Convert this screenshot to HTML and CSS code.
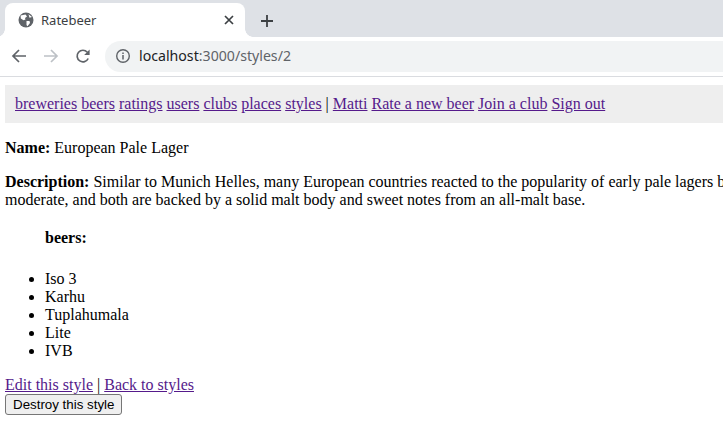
FILE: index.html
```html
<!DOCTYPE html>
<html lang="en">
<head>
<meta charset="utf-8">
<title>Ratebeer</title>
<link rel="stylesheet" href="styles.css">
</head>
<body>
<div class="tabstrip">
  <div class="tab">
    <svg class="favicon" width="16" height="16" viewBox="0 0 16 16"><circle cx="8" cy="8" r="7.5" fill="#5f6368"/><path d="M2.6 3.6 L7.5 2.6 L9 4.5 L7 6 L7.5 7.5 L5.5 8.2 L2.8 6.5 Z M8.5 9 L11.5 9 L12 11 L9.5 14.2 L8.5 13 Z M10.5 2.2 L14 5 L11.5 5.7 Z" fill="#fff"/></svg>
    <span class="tab-title">Ratebeer</span>
    <svg class="tab-close" width="10" height="10" viewBox="0 0 10 10"><path d="M1 1 L9 9 M9 1 L1 9" stroke="#3c4043" stroke-width="1.7" fill="none"/></svg>
  </div>
  <svg class="newtab" width="14" height="14" viewBox="0 0 14 14"><path d="M7 1 V13 M1 7 H13" stroke="#3c4043" stroke-width="1.8" fill="none"/></svg>
</div>
<div class="toolbar">
  <svg class="nav-icon" width="16" height="16" viewBox="0 0 16 16"><path d="M15 8 H2 M8 2 L2 8 L8 14" stroke="#5f6368" stroke-width="1.7" fill="none"/></svg>
  <svg class="nav-icon" width="16" height="16" viewBox="0 0 16 16"><path d="M1 8 H14 M8 2 L14 8 L8 14" stroke="#bdc1c6" stroke-width="1.7" fill="none"/></svg>
  <svg class="nav-icon" width="16" height="16" viewBox="0 0 16 16"><path d="M13.2 10.5 A5.8 5.8 0 1 1 12.3 4.2" stroke="#5f6368" stroke-width="1.7" fill="none"/><path d="M14.6 1.6 V7 H9.2 Z" fill="#5f6368"/></svg>
  <div class="omnibox">
    <svg class="info" width="16" height="16" viewBox="0 0 16 16"><circle cx="8" cy="8" r="6.3" stroke="#5f6368" stroke-width="1.4" fill="none"/><path d="M8 7 V11.5 M8 4.5 V6" stroke="#5f6368" stroke-width="1.5" fill="none"/></svg>
    <span class="url"><span class="host">localhost</span>:3000/styles/2</span>
  </div>
</div>
<div class="viewport">
  <div class="page">
    <div class="nav">
      <a href="#">breweries</a> <a href="#">beers</a> <a href="#">ratings</a> <a href="#">users</a> <a href="#">clubs</a> <a href="#">places</a> <a href="#">styles</a> | <a href="#">Matti</a> <a href="#">Rate a new beer</a> <a href="#">Join a club</a> <a href="#">Sign out</a>
    </div>
    <p><strong>Name:</strong> European Pale Lager</p>
    <p><strong>Description:</strong> Similar to Munich Helles, many European countries reacted to the popularity of early pale lagers by brewing their own. Hop flavor is<br>moderate, and both are backed by a solid malt body and sweet notes from an all-malt base.</p>
    <blockquote class="beers-title"><strong>beers:</strong></blockquote>
    <ul>
      <li>Iso 3</li>
      <li>Karhu</li>
      <li>Tuplahumala</li>
      <li>Lite</li>
      <li>IVB</li>
    </ul>
    <a href="#">Edit this style</a> | <a href="#">Back to styles</a>
    <form class="destroy"><button type="button">Destroy this style</button></form>
  </div>
</div>
</body>
</html>
```
FILE: styles.css
```css
html, body {
  margin: 0;
  height: 100%;
  overflow: hidden;
  background: #fff;
}
body {
  display: flex;
  flex-direction: column;
}
.tabstrip {
  height: 37px;
  background: #dee1e6;
  display: flex;
  align-items: flex-end;
  padding-left: 5px;
  flex: none;
}
.tab {
  position: relative;
  width: 240px;
  height: 34px;
  background: #fff;
  border-radius: 8px 8px 0 0;
  display: flex;
  align-items: center;
  padding: 0 13px;
  box-sizing: border-box;
}
.tab::before,
.tab::after {
  content: "";
  position: absolute;
  bottom: 0;
  width: 8px;
  height: 8px;
}
.tab::before {
  left: -8px;
  background: radial-gradient(circle at 0 0, #dee1e6 7.5px, #fff 8px);
}
.tab::after {
  right: -8px;
  background: radial-gradient(circle at 100% 0, #dee1e6 7.5px, #fff 8px);
}
.favicon { flex: none; }
.tab-title {
  font: 13px "Noto Sans", "Open Sans", sans-serif;
  color: #3c4043;
  margin-left: 7px;
  flex: 1;
}
.tab-close { flex: none; margin-right: -2px; }
.newtab { margin: 0 0 9px 15px; }
.toolbar {
  height: 38px;
  padding: 0 0 1px 11px;
  flex: none;
  display: flex;
  align-items: center;
  gap: 16px;
  border-bottom: 1px solid #dadce0;
}
.nav-icon { flex: none; }
.omnibox {
  height: 31px;
  flex: 1;
  margin: 1px 0 0 -2px;
  background: #f1f3f4;
  border-radius: 16px 0 0 16px;
  display: flex;
  align-items: center;
  padding-left: 10px;
  gap: 8px;
}
.info { margin-top: -1px; }
.url {
  font: 14.15px "Noto Sans", "Open Sans", sans-serif;
  color: #5f6368;
  margin-top: -2px;
}
.host { color: #202124; }
.viewport {
  flex: 1;
  overflow: hidden;
}
.page {
  width: 1200px;
  padding: 8px 5px 0;
  font-family: "Liberation Serif", "Times New Roman", serif;
  font-size: 16px;
  color: #000;
}
.nav {
  background: #eee;
  padding: 10px;
}
a { color: #551a8b; }
p { margin: 16px 0; }
.beers-title { margin: 20px 40px 23px; }
ul { margin: 16px 0; padding-left: 40px; }
.destroy { margin: 0; }
button {
  font: 13.333px "Liberation Sans", Arial, sans-serif;
  color: #000;
  background: #efefef;
  border: 1px solid #767676;
  border-radius: 3px;
  padding: 2px 7px;
  display: block;
}
```
